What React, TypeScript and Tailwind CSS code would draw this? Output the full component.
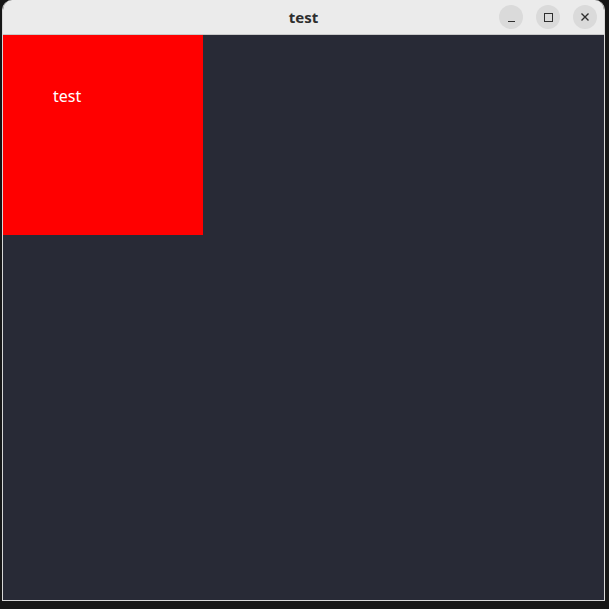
export default function App() {
  return (
    <div className="h-[609px] w-[609px] bg-[#161616] pl-[2px] pr-[4px] pb-[8px]" style={{ fontFamily: '"Noto Sans", "DejaVu Sans", sans-serif' }}>
      <div className="flex h-full flex-col overflow-hidden rounded-t-[10px] border-x border-b border-[#d8d8d8]">
        <div className="relative flex h-[35px] shrink-0 items-center justify-center border-b border-[#c9c9c9] bg-[#ebebeb]">
          <span className="text-[15px] font-bold text-[#2e2e2e]">test</span>
          <div className="absolute right-[7px] top-[5px] flex gap-[13px]">
            <button className="flex h-[24px] w-[24px] items-end justify-center rounded-full bg-[#dadada] pb-[7px]">
              <span className="block h-[1.5px] w-[7px] bg-[#2e2e2e]" />
            </button>
            <button className="flex h-[24px] w-[24px] items-center justify-center rounded-full bg-[#dadada]">
              <span className="block h-[9px] w-[9px] border border-[#2e2e2e]" />
            </button>
            <button className="flex h-[24px] w-[24px] items-center justify-center rounded-full bg-[#dadada]">
              <svg width="10" height="10" viewBox="0 0 10 10" stroke="#2e2e2e" strokeWidth="1.4">
                <path d="M1.5 1.5l7 7M8.5 1.5l-7 7" />
              </svg>
            </button>
          </div>
        </div>
        <div className="flex-1 bg-[#282a36]">
          <div className="h-[200px] w-[200px] bg-[#ff0000] pl-[50px] pt-[49px]">
            <span className="text-[16px] leading-[22px] text-white">test</span>
          </div>
        </div>
      </div>
    </div>
  )
}
